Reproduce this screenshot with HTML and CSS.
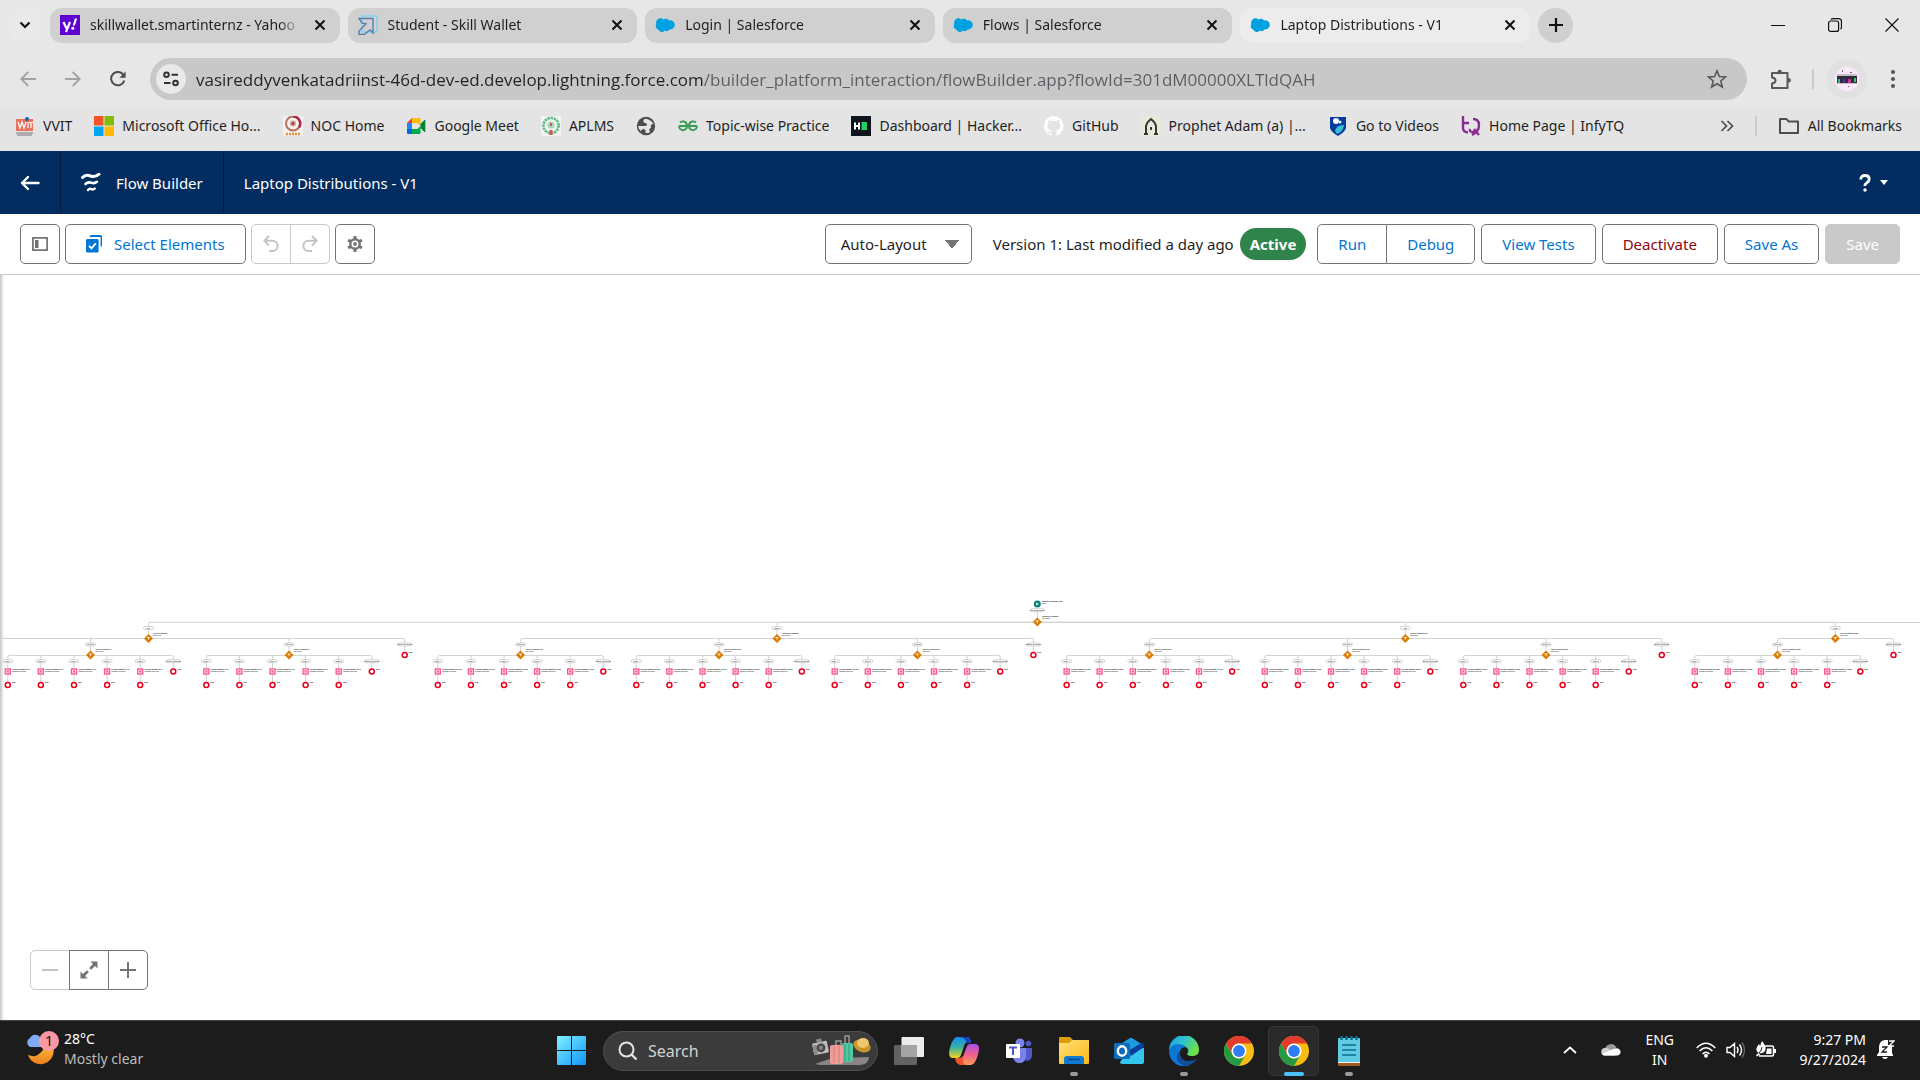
FILE: index.html
```html
<!DOCTYPE html>
<html lang="en">
<head>
<meta charset="utf-8">
<title>Laptop Distributions - V1</title>
<link rel="stylesheet" href="styles.css">
</head>
<body>
<svg class="defs" aria-hidden="true">
  <defs>
    <symbol id="i-close" viewBox="0 0 12 12"><path d="M1.5 1.5l9 9M10.500 1.500l-9 9" stroke="currentColor" stroke-width="2" fill="none"/></symbol>
    <symbol id="i-cloud" viewBox="0 0 20 14"><path d="M8.300 1.500A4 4 0 0 1 14 2.400a4.600 4.600 0 0 1 5.800 4.400c0 3-2.600 5.100-5.300 4.600a3.500 3.500 0 0 1-4.600 1.200A4 4 0 0 1 3.200 11.600 3.700 3.700 0 0 1 1.400 6 4.200 4.200 0 0 1 5.300.3c1.200 0 2.300.5 3 1.200z" fill="#00a1e0"/></symbol>
    <symbol id="i-chrome" viewBox="0 0 30 30">
      <circle cx="15" cy="15" r="15" fill="#fbbc12"/>
      <path d="M2 7.500A15 15 0 0 1 28 7.500L15 7.500a7.500 7.500 0 0 0-6.500 11.200z" fill="#e33b2e"/>
      <path d="M2 7.500A15 15 0 0 0 15 30l6.500-11.300a7.500 7.500 0 0 1-13 0z" fill="#259a45"/>
      <circle cx="15" cy="15" r="7.500" fill="#fff"/><circle cx="15" cy="15" r="5.900" fill="#2f7df6"/>
    </symbol>
  </defs>
</svg>

<header class="browser">
  <div class="tabstrip">
    <button class="tab-search" aria-label="Search tabs"><svg width="12" height="8" viewBox="0 0 12 8"><path d="M1.500 1.500L6 6l4.500-4.500" stroke="#111" stroke-width="2.200" fill="none"/></svg></button>
    <div class="tabs">
      <div class="tab">
        <svg width="20" height="20" viewBox="0 0 20 20"><path fill="#5f01d1" d="M0 0h20v20H0z"/><path d="M3.500 7l3 6.500M10 7l-4 10M16 3.500l-2.200 7" stroke="#fff" stroke-width="2.200" fill="none"/><circle cx="12.800" cy="13.300" r="1.500" fill="#fff"/></svg>
        <span class="tab-title">skillwallet.smartinternz - Yahoo</span>
        <button class="tab-close" aria-label="Close tab"><svg width="12" height="12"><use href="#i-close"/></svg></button>
      </div>
      <div class="tab">
        <svg width="20" height="20" viewBox="0 0 20 20" fill="none"><path d="M4 1h15v16H4z" stroke="#7fd4f0" stroke-width="1.400"/><path d="M1 3.500h14V18l-3-3-6 4.500H1v-3.500L8 9 4 8z" stroke="#5d7ca8" stroke-width="1.400"/></svg>
        <span class="tab-title">Student - Skill Wallet</span>
        <button class="tab-close" aria-label="Close tab"><svg width="12" height="12"><use href="#i-close"/></svg></button>
      </div>
      <div class="tab">
        <svg width="20" height="14"><use href="#i-cloud"/></svg>
        <span class="tab-title">Login | Salesforce</span>
        <button class="tab-close" aria-label="Close tab"><svg width="12" height="12"><use href="#i-close"/></svg></button>
      </div>
      <div class="tab">
        <svg width="20" height="14"><use href="#i-cloud"/></svg>
        <span class="tab-title">Flows | Salesforce</span>
        <button class="tab-close" aria-label="Close tab"><svg width="12" height="12"><use href="#i-close"/></svg></button>
      </div>
      <div class="tab tab-active">
        <svg width="20" height="14"><use href="#i-cloud"/></svg>
        <span class="tab-title">Laptop Distributions - V1</span>
        <button class="tab-close" aria-label="Close tab"><svg width="12" height="12"><use href="#i-close"/></svg></button>
      </div>
    </div>
    <div class="strip-end">
      <button class="new-tab" aria-label="New tab"><svg width="14" height="14" viewBox="0 0 14 14"><path d="M7 0v14M0 7h14" stroke="#111" stroke-width="2.200"/></svg></button>
      <div class="window-buttons">
        <button aria-label="Minimize"><svg width="14" height="14" viewBox="0 0 14 14"><path d="M0 7.500h14" stroke="#111"/></svg></button>
        <button aria-label="Restore"><svg width="14" height="14" viewBox="0 0 14 14" fill="none" stroke="#111" stroke-width="1.200"><rect x=".6" y="3" width="10" height="10.400" rx="2"/><path d="M3 1.500Q3.500.6 5 .6h5.500q3 0 3 3v5.500q0 1.500-1 2"/></svg></button>
        <button aria-label="Close"><svg width="14" height="14" viewBox="0 0 14 14"><path d="M.5.5l13 13M13.500.5l-13 13" stroke="#111" stroke-width="1.200"/></svg></button>
      </div>
    </div>
  </div>

  <div class="navbar">
    <div class="nav-buttons">
      <button aria-label="Back"><svg width="16" height="16" viewBox="0 0 16 16" fill="none" stroke="#a3a3a3" stroke-width="1.800"><path d="M16 8H1.500M8.300 1L1.300 8l7 7"/></svg></button>
      <button aria-label="Forward"><svg width="16" height="16" viewBox="0 0 16 16" fill="none" stroke="#a3a3a3" stroke-width="1.800"><path d="M0 8h14.500M7.700 1l7 7-7 7"/></svg></button>
      <button aria-label="Reload"><svg width="16" height="16" viewBox="0 0 16 16"><path d="M14.300 9.500A6.700 6.700 0 1 1 13.500 4" fill="none" stroke="#4b4d50" stroke-width="2"/><path d="M15.600.5v6.300H9.400z" fill="#4b4d50"/></svg></button>
    </div>
    <div class="omnibox">
      <button class="site-info" aria-label="View site information"><svg width="16" height="16" viewBox="0 0 16 16" fill="none" stroke="#333" stroke-width="2"><circle cx="3.500" cy="3.800" r="2.300"/><path d="M8.500 3.800H15M1 12h6.500"/><circle cx="12.500" cy="12" r="2.300"/></svg></button>
      <input class="url" aria-label="Address and search bar" value="vasireddyvenkatadriinst-46d-dev-ed.develop.lightning.force.com/builder_platform_interaction/flowBuilder.app?flowId=301dM00000XLTldQAH">
      <button aria-label="Bookmark this tab"><svg width="20" height="20" viewBox="0 0 20 20"><path d="M10 1.800l2.400 5.700 6.100.5-4.700 4 1.500 6-5.300-3.200L4.700 18l1.500-6-4.700-4 6.100-.5z" fill="none" stroke="#55585c" stroke-width="1.600"/></svg></button>
    </div>
    <div class="nav-end">
      <button aria-label="Extensions"><svg width="22" height="22" viewBox="0 0 22 22"><path d="M2 5h15.500v15H2v-4.500q3.500-.5 3.500-3T2 9.500z" fill="none" stroke="#55585c" stroke-width="2" stroke-linejoin="round"/><path d="M7.500 4.500a2.200 2.700 0 0 1 4.400 0zM18 10a2.800 2.200 0 0 1 0 4.600z" fill="#55585c"/></svg></button>
      <span class="divider"></span>
      <button aria-label="Profile"><svg width="40" height="40" viewBox="0 0 40 40"><circle cx="20" cy="20" r="20" fill="#e2e1e2"/><circle cx="20" cy="20" r="12" fill="#fce8fb"/><path fill="#c9bcca" d="M10 15h20v10H10z"/><path fill="#332a3a" d="M10 17h20v7H10z"/><path fill="#3dc27c" d="M11 20h2v4h-2zM27 19h2v4h-2z"/><path fill="#4b2fd0" d="M16 20h2v4h-2z"/><path fill="#d0308c" d="M21 20h3v4h-3z"/><path fill="#666" d="M15 11h1v2h-1zM23 13h2v1h-2zM21 27h1v1h-1z"/></svg></button>
      <button aria-label="Menu"><svg width="6" height="20" viewBox="0 0 6 20" fill="#55585c"><circle cx="3" cy="3" r="2.100"/><circle cx="3" cy="10" r="2.100"/><circle cx="3" cy="17" r="2.100"/></svg></button>
    </div>
  </div>

  <nav class="bookmarks">
    <a href="#"><svg width="20" height="20" viewBox="0 0 20 20"><path fill="#e9735f" d="M1 3h17v12H1z"/><path d="M3 6l2 6 2-6 2 6 2-6M13 6v6M14 6.500h4M16 6.500V12" stroke="#fff" stroke-width="1.200" fill="none"/><circle cx="12" cy="3" r="2" fill="#1763b0"/><path d="M1 17h17M2 19h15" stroke="#777"/></svg>VVIT</a>
    <a href="#"><svg width="20" height="20" viewBox="0 0 20 20"><path fill="#f35325" d="M0 0h9.500v9.500H0z"/><path fill="#81bc06" d="M10.500 0H20v9.500h-9.500z"/><path fill="#05a6f0" d="M0 10.500h9.500V20H0z"/><path fill="#ffba08" d="M10.500 10.500H20V20h-9.500z"/></svg>Microsoft Office Ho...</a>
    <a href="#"><svg width="20" height="20" viewBox="0 0 20 20"><path fill="#f5f1ef" d="M0 0h20v20H0z"/><circle cx="10" cy="7.500" r="7" fill="none" stroke="#b5735f" stroke-width="2"/><path d="M10 .5a7 7 0 0 1 6 11" stroke="#b0244e" stroke-width="2.400" fill="none"/><circle cx="10" cy="7.500" r="3" fill="#d1a08e"/><circle cx="10" cy="7.500" r="1.200" fill="#7d2b2b"/><path d="M3 18h14" stroke="#e0913f" stroke-width="2.400" stroke-dasharray="2 1"/></svg>NOC Home</a>
    <a href="#"><svg width="20" height="20" viewBox="0 0 20 20"><path fill="#2684fc" d="M1 7h5v7H1z"/><path fill="#ea4335" d="M1 7l5-5v5z"/><path fill="#ffba00" d="M6 2h7.500q1 0 1 1v7l-3-3H6z"/><path fill="#0066da" d="M1 13h5v5H2q-1 0-1-1z"/><path fill="#00ac47" d="M6 13h5.500l3-3v7q0 1-1 1H6z"/><path fill="#00832d" d="M14.500 8l4-4q.8-.3.800.5v11q0 .8-.8.500l-4-4z"/></svg>Google Meet</a>
    <a href="#"><svg width="20" height="20" viewBox="0 0 20 20"><path fill="#f3f3f1" d="M0 0h20v20H0z"/><circle cx="10" cy="9.500" r="7.600" fill="none" stroke="#62bd85" stroke-width="2.600" stroke-dasharray="2.500 .7"/><circle cx="10" cy="9" r="3.600" fill="#9fdcb5"/><path fill="#d75450" d="M9 7h2v3H9zM8.500 14h3v5h-3z"/></svg>APLMS</a>
    <a href="#" aria-label="Bookmark"><svg width="20" height="20" viewBox="0 0 20 20"><circle cx="10" cy="10" r="9.200" fill="#4b4d50"/><path d="M10 2.800c-2 .2-3 1.700-2.600 3 .5 1.400 2.600 1 3.500 2.300.6 1-.3 2-2 2H2.200q.3 2.700 2.300 4.900l2.700-2.200 2.300 1.100v2.900q2 .7 4.400-.6l-.6-2.900 2-2-.7-2.300 2.600-1Q16.500 4.800 10 2.800z" fill="#e4e4e4"/></svg></a>
    <a href="#"><svg width="20" height="20" viewBox="0 0 20 20" fill="none" stroke="#3a9c50" stroke-width="1.900"><path d="M1 10h18M2 6.500q2-1.500 4-1 3 .8 3 4.500t-4 4.200Q1.500 14 1 10M18 6.500q-2-1.500-4-1-3 .8-3 4.500t4 4.200Q18.500 14 19 10"/></svg>Topic-wise Practice</a>
    <a href="#"><svg width="20" height="20" viewBox="0 0 20 20"><path fill="#0e141e" d="M0 0h20v20H0z"/><path d="M4 6.500v7M8 6.500v7M4 10h4" stroke="#fff" stroke-width="2"/><path fill="#1ed05d" d="M10.500 6H16v8h-5.500z"/></svg>Dashboard | Hacker...</a>
    <a href="#"><svg width="20" height="20" viewBox="0 0 16 16"><path fill="#fff" d="M8 0a8 8 0 0 0-2.500 15.600c.4.100.5-.2.500-.4v-1.500c-2 .4-2.600-.5-2.800-1-.1-.2-.5-.9-.8-1.100-.3-.1-.7-.5 0-.5.600 0 1.100.6 1.200.8.700 1.200 1.900.9 2.300.7.100-.5.300-.9.500-1.100-1.700-.2-3.600-.9-3.600-4 0-.8.300-1.500.8-2.100-.1-.2-.4-1 .1-2.100 0 0 .7-.2 2.200.8a7.500 7.500 0 0 1 4 0c1.500-1 2.200-.8 2.200-.8.500 1.100.2 1.900.1 2.100.5.600.8 1.300.8 2.100 0 3.100-1.900 3.700-3.700 3.900.3.300.6.800.6 1.500v2.200c0 .2.100.5.500.4A8 8 0 0 0 8 0z"/></svg>GitHub</a>
    <a href="#"><svg width="20" height="20" viewBox="0 0 20 20"><path fill="#ebe8da" d="M0 0h20v20H0z"/><path d="M5 19V10q1-4 5-7 4 3 5 7v9M3 18h4M13 18h4" stroke="#333a3a" stroke-width="2" fill="none"/><path fill="#333a3a" d="M9 11h2v3H9z"/></svg>Prophet Adam (a) |...</a>
    <a href="#"><svg width="20" height="20" viewBox="0 0 20 20"><path fill="#0b3b9e" d="M2 1h16v11q-1 4-8 8-7-4-8-8z"/><circle cx="8" cy="5" r="3" fill="#fff"/><circle cx="12" cy="6" r="1.500" fill="#cfe"/><path fill="#35c3d3" d="M7 15q1-6 9-6-1 7-7 9z"/></svg>Go to Videos</a>
    <a href="#"><svg width="20" height="20" viewBox="0 0 20 20" fill="none" stroke="#8b2a94" stroke-width="2.400"><path d="M2 0v12q0 4 5 4.500M1 7h7M12 3q6 0 6 6 0 7-6 7-4 0-3-3M13 13l5 6M11 19l6-4"/></svg>Home Page | InfyTQ</a>
    <span class="bookmarks-end">
      <button aria-label="More bookmarks"><svg width="14" height="12" viewBox="0 0 14 12" fill="none" stroke="#4b4d50" stroke-width="1.700"><path d="M1.500 1l5 5-5 5M7.500 1l5 5-5 5"/></svg></button>
      <span class="divider"></span>
      <a href="#"><svg width="22" height="18" viewBox="0 0 22 18"><path d="M2 2h6.500l2 2.500H20V16H2z" fill="none" stroke="#4b4d50" stroke-width="2" stroke-linejoin="round"/></svg>All Bookmarks</a>
    </span>
  </nav>
</header>

<div class="app-header">
  <a class="app-back" href="#" aria-label="Back"><svg width="20" height="16" viewBox="0 0 20 16" fill="none" stroke="#fff" stroke-width="2.400" stroke-linecap="round" stroke-linejoin="round"><path d="M18.500 8H2M8 2L2 8l6 6"/></svg></a>
  <div class="app-name"><svg width="20" height="20" viewBox="0 0 20 20" fill="none" stroke="#fff" stroke-linecap="round"><path d="M1.500 4.500q3-3.500 8-1.500 5 1.500 8.500-1.800" stroke-width="3"/><path d="M4.500 11q2.500-2.500 6-1.200 3 1 5.500-1" stroke-width="2.600"/><path d="M7 17q1.500-1.800 3.500-.8 1.700.7 3.200-.6" stroke-width="2.400"/></svg>Flow Builder</div>
  <h1 class="flow-name">Laptop Distributions - V1</h1>
  <button class="help" aria-label="Help"><svg width="12" height="18" viewBox="0 0 12 18"><path d="M1.800 5.500q0-4 4.200-4t4.200 3.700q0 2-2.200 3.400T6 12" fill="none" stroke="#fff" stroke-width="2.800"/><circle cx="6" cy="16" r="1.700" fill="#fff"/></svg><svg width="8" height="5" viewBox="0 0 8 5"><path fill="#fff" d="M0 0h8L4 5z"/></svg></button>
</div>

<div class="toolbar">
  <button class="btn btn-icon" aria-label="Toggle toolbox"><svg width="16" height="14" viewBox="0 0 16 14"><path d="M.9.900h14.200v12.200H.9z" fill="none" stroke="#747474" stroke-width="1.700"/><path fill="#747474" d="M3 3h3.500v8H3z"/></svg></button>
  <button class="btn"><svg width="16" height="18" viewBox="0 0 16 18"><path d="M4.500 2.200q0-1.200 1.200-1.200h8.300q1.500 0 1.500 1.500v9" fill="none" stroke="#0176d3" stroke-width="1.800"/><rect y="4" width="12.600" height="13.500" rx="1.500" fill="#0176d3"/><path d="M3 10.800l2.500 2.600 4.200-5" fill="none" stroke="#fff" stroke-width="1.800"/></svg>Select Elements</button>
  <div class="btn-group">
    <button class="btn btn-icon btn-off" disabled aria-label="Undo"><svg width="16" height="18" viewBox="0 0 16 18" fill="none" stroke="#c4c4c4" stroke-width="2"><path d="M6 1L1.500 5.800 6 10.600M2 5.800h7.500a5 5 0 0 1 0 10.200H6"/></svg></button>
    <button class="btn btn-icon btn-off" disabled aria-label="Redo"><svg width="16" height="18" viewBox="0 0 16 18" fill="none" stroke="#c4c4c4" stroke-width="2"><path d="M10 1l4.500 4.800L10 10.600M14 5.800H6.500a5 5 0 0 0 0 10.200H10"/></svg></button>
  </div>
  <button class="btn btn-icon" aria-label="Settings"><svg width="16" height="16" viewBox="0 0 16 16"><circle cx="8" cy="8" r="4.700" fill="none" stroke="#747474" stroke-width="2.400"/><circle cx="8" cy="8" r="1.900" fill="#747474"/><path d="M8 0v3M8 13v3M1.100 4l2.500 1.500M12.400 10.500l2.500 1.500M1.100 12l2.500-1.500M12.400 5.500L14.900 4" stroke="#747474" stroke-width="3"/></svg></button>
  <div class="toolbar-right">
    <select class="layout-select" aria-label="Layout"><option>Auto-Layout</option></select>
    <span class="version">Version 1: Last modified a day ago</span>
    <span class="badge">Active</span>
    <div class="btn-group"><button class="btn">Run</button><button class="btn">Debug</button></div>
    <button class="btn">View Tests</button>
    <button class="btn btn-danger">Deactivate</button>
    <button class="btn">Save As</button>
    <button class="btn btn-save" disabled>Save</button>
  </div>
</div>

<main class="canvas">
  <svg class="flow" id="flow" role="img" aria-label="Flow diagram"></svg>
  <div class="zoom btn-group">
    <button class="btn btn-icon btn-off" disabled aria-label="Zoom out"><svg width="18" height="18" viewBox="0 0 18 18"><path d="M1 9h16" stroke="#c4c4c4" stroke-width="2"/></svg></button>
    <button class="btn btn-icon" aria-label="Fit to view"><svg width="18" height="18" viewBox="0 0 18 18" fill="#747474"><path d="M17.500.5v7l-2.400-2.400-4.100 3.700-1.800-1.800 3.700-4.100L10.500.5zM.5 17.500v-7l2.400 2.400L7 9.200 8.800 11l-3.700 4.100 2.400 2.400z"/></svg></button>
    <button class="btn btn-icon" aria-label="Zoom in"><svg width="18" height="18" viewBox="0 0 18 18"><path d="M1 9h16M9 1v16" stroke="#747474" stroke-width="2"/></svg></button>
  </div>
</main>

<footer class="taskbar">
  <button class="weather">
    <svg width="34" height="36" viewBox="0 0 34 36"><defs><linearGradient id="moon" x2="0" y2="1"><stop stop-color="#f8bd3a"/><stop offset="1" stop-color="#ed7f1e"/></linearGradient></defs><path d="M28 16a13 13 0 0 1-25 8q8 3 12-2 4-3 4-8z" fill="url(#moon)"/><path d="M5 16a5 5 0 0 1 0-9 6 6 0 0 1 10-1q5 1 5 10z" fill="#7fabf4"/><circle cx="24" cy="10" r="10" fill="#fc98a2"/><text x="24" y="15" class="weather-count">1</text></svg>
    <span class="two-lines"><span>28°C</span><span class="muted">Mostly clear</span></span>
  </button>

  <div class="dock">
    <button class="dock-item" aria-label="Start"><svg width="29" height="29" viewBox="0 0 29 29"><defs><linearGradient id="win" x2="1" y2="1"><stop stop-color="#7ff2ff"/><stop offset="1" stop-color="#0f93fb"/></linearGradient></defs><path fill="url(#win)" d="M0 1q0-1 1-1h13v14H0zM15 0h13q1 0 1 1v13H15zM0 15h14v14H1q-1 0-1-1zM15 15h14v13q0 1-1 1H15z"/></svg></button>
    <label class="search">
      <svg width="20" height="20" viewBox="0 0 20 20" fill="none" stroke="#e3e3e3"><circle cx="8.500" cy="8.500" r="7" stroke-width="2"/><path d="M13.500 13.500l5 5" stroke-width="2.400"/></svg>
      <input type="search" placeholder="Search" aria-label="Search">
      <svg width="60" height="34" viewBox="0 0 60 34"><path d="M4 30q14-6 24-6l30-1q0 7-9 8H9z" fill="#8a8486"/><g transform="rotate(-12 9 14)"><rect x="2" y="8" width="15" height="12" rx="1" fill="#bdbdbd"/><path fill="#8e8e8e" d="M2 10h4v10H2zM7 5h5v3H7z"/><circle cx="10" cy="14" r="4.500" fill="#4a4a4a"/><circle cx="10" cy="14" r="2" fill="#888"/></g><path d="M34 9V2h4v7M25 11V7h5v4" fill="none" stroke="#999" stroke-width="1.500"/><rect x="31" y="9" width="11" height="19" rx="2" fill="#55c9a6"/><path d="M34 10v17M38 10v17" stroke="#319d7d"/><rect x="19" y="11" width="13" height="19" rx="2" fill="#ee9d98"/><path d="M23 12v17M28 12v17" stroke="#d67c7c"/><ellipse cx="51" cy="12" rx="9" ry="6" transform="rotate(22 51 12)" fill="#c9952d"/><ellipse cx="52" cy="9" rx="6" ry="5" fill="#efc66a"/></svg>
    </label>
    <button class="dock-item" aria-label="Task view"><svg width="30" height="28" viewBox="0 0 30 28"><rect y="8" width="23" height="20" rx="1" fill="#626262"/><rect x="7.500" width="22.500" height="20" rx="1" fill="#ececec"/><path fill="#a4a4a4" d="M7.500 8H23v12H7.500z"/></svg></button>
    <button class="dock-item" aria-label="Copilot"><svg width="30" height="28" viewBox="0 0 30 28"><defs><linearGradient id="co1" x2="0" y2="1"><stop stop-color="#168cf0"/><stop offset=".5" stop-color="#3bb2a3"/><stop offset="1" stop-color="#f8d21b"/></linearGradient><linearGradient id="co2" x2="0" y2="1"><stop stop-color="#a850ef"/><stop offset=".5" stop-color="#f0608c"/><stop offset="1" stop-color="#ff9b54"/></linearGradient></defs><path d="M8 0h10q3 0 4 5h-3q-3 0-4 4l-3 9q-1 3-3 3H4q-4 0-4-5 1-9 5-14 1-2 3-2z" fill="url(#co1)"/><path d="M10 0h8q3 0 4 6h-4q-2-6-8-6z" fill="#173fc4"/><path d="M21 7h5q4 0 4 5-1 8-4 13-2 3-4 3H12q-3 0-4-7h3q3 0 4-4l3-8q1-2 3-2z" fill="url(#co2)"/><path d="M6 21h5q2 0 3-2-1 9 4 9h-6q-5 0-6-7z" fill="#f2552c"/></svg></button>
    <button class="dock-item" aria-label="Teams"><svg width="28" height="26" viewBox="0 0 28 26"><circle cx="15" cy="5" r="4.500" fill="#7b83eb"/><circle cx="23.500" cy="5.500" r="2.800" fill="#5059c9"/><path d="M17 10h10v8q-1 5-6 5z" fill="#5059c9"/><path d="M8 10h13v9q-1 6-6.500 6T8 19z" fill="#7b83eb"/><rect x="1" y="6" width="14" height="14" rx="1" fill="#fff"/><path d="M4 9.500h8M8 9v8" stroke="#5059c9" stroke-width="2"/></svg></button>
    <button class="dock-item dock-open" aria-label="File Explorer"><svg width="30" height="28" viewBox="0 0 30 28"><defs><linearGradient id="fo" x2="1" y2="1"><stop stop-color="#ffe07a"/><stop offset="1" stop-color="#fdb813"/></linearGradient></defs><path d="M0 1q0-1 1-1h10l3 3h15v6H0z" fill="#dd9c09"/><path d="M0 6h10l3-3h17v23q0 1-1 1H1q-1 0-1-1z" fill="url(#fo)"/><path d="M5 27v-5q0-3 3-3h14q3 0 3 3v5z" fill="#0f7bd3"/><path d="M9 22.500h12" stroke="#0a4a8f" stroke-width="1.500"/></svg></button>
    <button class="dock-item" aria-label="Outlook"><svg width="30" height="28" viewBox="0 0 30 28"><path d="M5 8L16 1q1-.6 2 0l11 7v6l-12 8H5z" fill="#1d9bdf"/><path d="M14 17L29 7v6L17 21z" fill="#0a3d9c"/><path d="M12 17l7-5 11-1v14q0 2-2 2H8q-2 0-2-2z" fill="#36c5f0"/><path d="M14 14L29 5l1 5-13 9z" fill="#083f99"/><rect y="6" width="16" height="16" rx="1.500" fill="#0f6cbd"/><ellipse cx="8" cy="14" rx="4.200" ry="4.700" fill="none" stroke="#fff" stroke-width="2.400"/></svg></button>
    <button class="dock-item dock-open" aria-label="Microsoft Edge"><svg width="30" height="30" viewBox="0 0 30 30"><defs><linearGradient id="ed1" x2="1" y2=".5"><stop stop-color="#1d9be0"/><stop offset=".5" stop-color="#30c3cf"/><stop offset="1" stop-color="#6fe04a"/></linearGradient></defs><path d="M0 14A15 15 0 0 1 30 14q0 6-7 6-4 0-5-2 3-4-1-7Q8 6 0 14z" fill="url(#ed1)"/><path d="M0 15q2-7 9-7 5 0 8 3-7 0-6 8 1 8 10 10A15 15 0 0 1 0 15z" fill="#0c78d4"/><path d="M11 15q-1 10 9 10 4 0 8-2-5 7-13 7-9-4-7-11 1-3 3-4z" fill="#114f9c"/></svg></button>
    <button class="dock-item" aria-label="Google Chrome"><svg width="30" height="30"><use href="#i-chrome"/></svg></button>
    <button class="dock-item dock-open dock-current" aria-label="Google Chrome, current window"><svg width="30" height="30"><use href="#i-chrome"/></svg></button>
    <button class="dock-item dock-open" aria-label="Notepad"><svg width="22" height="30" viewBox="0 0 22 30"><path fill="#a35a1e" d="M0 26h22v3q0 1-1 1H1q-1 0-1-1z"/><path fill="#f2f2f2" d="M0 24h22v3H0z"/><path fill="#62cbe4" d="M0 3q0-1 1-1h20q1 0 1 1v23H0z"/><path d="M3.500 0v4M8.500 0v4M13.500 0v4M18.500 0v4" stroke="#0b6f8e" stroke-width="2.400"/><path d="M4 9h14M4 14h14M4 19h14" stroke="#0b6f8e" stroke-width="1.600"/></svg></button>
  </div>

  <div class="tray">
    <button aria-label="Show hidden icons"><svg width="14" height="8" viewBox="0 0 14 8"><path d="M1 7l6-5.500L13 7" fill="none" stroke="#fff" stroke-width="1.700"/></svg></button>
    <button class="tray-cloud" aria-label="OneDrive"><svg width="20" height="13" viewBox="0 0 20 13"><path d="M4 6a6 6 0 0 1 11.500-1L10 9z" fill="#9a9a9a"/><path d="M4 12.500A3.700 3.700 0 0 1 4 5q3-.5 5 1.500l7.500 4q-1 2-3 2z" fill="#d0d0d0"/><path d="M1 11l9-4q6-3 8-1 3 3 .5 5.500-1 1-2.500 1H4q-2 0-3-1.500z" fill="#fff"/></svg></button>
    <button class="lang"><span>ENG</span><span>IN</span></button>
    <button class="status" aria-label="Network, volume and battery">
      <svg width="20" height="16" viewBox="0 0 20 16" fill="none" stroke="#fff" stroke-width="1.500"><path d="M.7 6q9.300-9.500 18.600 0M3.600 9q6.400-6.500 12.800 0M6.500 12q3.500-3.600 7 0"/><circle cx="10" cy="13.700" r="1.200" fill="#fff"/></svg>
      <svg width="20" height="16" viewBox="0 0 20 16" fill="none" stroke="#fff" stroke-width="1.400"><path d="M1 5.500h3l4.500-4v13l-4.500-4H1zM11 5q2 3 0 6M13.500 2.500q4 5.500 0 11"/><path d="M16 .5q5 7.500 0 15" stroke="#666"/></svg>
      <svg width="20" height="17" viewBox="0 0 20 17"><path d="M8 5h8q1.500 0 1.500 1.500v7q0 1.500-1.500 1.500H3" fill="none" stroke="#fff" stroke-width="1.500"/><path fill="#fff" d="M18 8h2v4h-2zM11 7.500h4.500V13H10zM6 0q5 6 3 10-2 3-6 2Q-1 10 1 6q1-2 2-3l1 2zM0 14l3-2 1 1.500-3 2z"/><path d="M3 12q3-3 3-6" stroke="#1c1c1c" fill="none"/></svg>
    </button>
    <button class="clock"><span>9:27 PM</span><span>9/27/2024</span></button>
    <button aria-label="Notifications"><svg width="18" height="19" viewBox="0 0 18 19"><path fill="#fff" d="M2 7q0-6 6-7h3v5h3l1 1v7l1 2v1H0v-1l2-3zM5 17h6q-1 2-3 2t-3-2z"/><path d="M5 7h5l-5 5h5" fill="none" stroke="#1c1c1c" stroke-width="1.300"/><path d="M12 1h5l-5 5h5" fill="none" stroke="#fff" stroke-width="1.300"/></svg></button>
  </div>
</footer>
<script src="flow.js"></script>
</body>
</html>
```
FILE: styles.css
```css
* { box-sizing: border-box; }

body {
  margin: 0;
  min-height: 100vh;
  display: flex;
  flex-direction: column;
  font-family: "Noto Sans", "Open Sans", sans-serif;
  font-size: 14px;
  line-height: 20px;
  color: #1f1f1f;
  background: #fff;
  overflow-x: hidden;
}

button, input, select { font: inherit; color: inherit; }
button { border: 0; background: none; padding: 0; cursor: pointer; }
button, a { display: flex; align-items: center; justify-content: center; }
a { color: inherit; text-decoration: none; }
svg { flex: none; display: block; }
.defs { position: absolute; width: 0; height: 0; }

/* Browser window */
.browser { background: #e4e4e4; }

.tabstrip {
  display: flex;
  align-items: center;
  height: 50px;
  background: #e7e7e7;
}
.tab-search {
  width: 32px;
  height: 32px;
  margin: 0 9px;
  border-radius: 10px;
  background: #e9e9e9;
}
.tabs { flex: 1; display: flex; gap: 8px; }
.tab {
  flex: 1;
  min-width: 0;
  height: 35px;
  display: flex;
  align-items: center;
  gap: 10px;
  padding: 0 14px 0 10px;
  border-radius: 12px;
  background: #d0d0d0;
}
.tab-active { background: #ececec; }
.tab-title {
  flex: 1;
  overflow: hidden;
  white-space: nowrap;
  mask-image: linear-gradient(to right, #000 90%, transparent 100%);
}
.tab-close { width: 12px; height: 12px; margin-left: 4px; color: #111; }
.strip-end {
  width: 390px;
  display: flex;
  align-items: center;
  justify-content: space-between;
  padding-left: 8px;
}
.new-tab { width: 35px; height: 35px; border-radius: 50%; background: #cfcfcf; }
.window-buttons { display: flex; }
.window-buttons button { width: 57px; height: 40px; }

.navbar { display: flex; align-items: center; height: 58px; background: #e7e7e7; }
.nav-buttons { display: flex; width: 150px; padding-left: 5px; }
.nav-buttons button { width: 45px; height: 40px; }
.omnibox {
  flex: 1;
  display: flex;
  align-items: center;
  height: 42px;
  padding: 0 20px 0 6px;
  border-radius: 21px;
  background: #c8c8c8;
}
.site-info { width: 30px; height: 30px; border-radius: 50%; background: #e9e9e9; }
.url {
  flex: 1;
  min-width: 0;
  height: 40px;
  margin-left: 10px;
  border: 0;
  padding: 0;
  outline: 0;
  font-family: "Open Sans", sans-serif;
  font-size: 17px;
  color: transparent;
  background: linear-gradient(to right, #202124 508px, #5a5d61 508px);
  background-clip: text;
}
.nav-end { display: flex; align-items: center; width: 173px; padding-left: 23px; }
.divider { width: 2px; height: 20px; background: #cbcbcb; }
.nav-end .divider { margin: 0 13px 0 20px; }
.nav-end button:last-child { width: 20px; margin-left: 16px; }

.bookmarks {
  display: flex;
  align-items: center;
  gap: 22px;
  height: 43px;
  padding: 0 18px 8px 15px;
  white-space: nowrap;
}
.bookmarks a { gap: 8px; }
.bookmarks-end { display: flex; align-items: center; gap: 21px; margin-left: auto; }

/* Application header */
.app-header {
  display: flex;
  height: 63px;
  background: #032d60;
  color: #fff;
  font-size: 15px;
}
.app-back { width: 61px; border-right: 1px solid #061c3d; }
.app-name {
  display: flex;
  align-items: center;
  gap: 15px;
  padding: 0 20px;
  border-right: 1px solid #061c3d;
}
.flow-name { margin: auto 20px; font-size: 15px; font-weight: 400; }
.help { margin-left: auto; gap: 9px; padding: 0 32px; }

/* Toolbar */
.toolbar {
  display: flex;
  align-items: center;
  gap: 5px;
  min-height: 61px;
  padding: 0 20px;
  border-bottom: 1px solid #c9c9c9;
  font-size: 15px;
}
.toolbar-right { display: flex; align-items: center; gap: 6px; margin-left: auto; }
.btn {
  height: 40px;
  padding: 0 20px;
  gap: 12px;
  border: 1px solid #747474;
  border-radius: 5px;
  background: #fff;
  color: #0176d3;
  white-space: nowrap;
}
.btn-icon { width: 40px; padding: 0; }
.btn-group { display: flex; }
.btn-group .btn + .btn { margin-left: -1px; }
.btn-group .btn:not(:first-child) { border-top-left-radius: 0; border-bottom-left-radius: 0; }
.btn-group .btn:not(:last-child) { border-top-right-radius: 0; border-bottom-right-radius: 0; }
.btn-off { border-color: #c9c9c9; }
.btn-danger { color: #8e030f; }
.btn-save { border-color: #c9c9c9; background: #c9c9c9; color: #fff; }
.layout-select {
  appearance: none;
  width: 147px;
  height: 40px;
  padding: 0 15px;
  border: 1px solid #747474;
  border-radius: 5px;
  background-color: #fff;
  background-image: linear-gradient(to bottom right, #747474 50%, transparent 50%), linear-gradient(to bottom left, #747474 50%, transparent 50%);
  background-size: 7px 9px;
  background-position: right 12px center, right 19px center;
  background-repeat: no-repeat;
}
.version { margin-left: 15px; white-space: nowrap; }
.badge {
  padding: 6px 10px;
  margin-right: 5px;
  border-radius: 16px;
  background: #2e844a;
  color: #fff;
  font-weight: 700;
}

/* Flow canvas */
.canvas {
  position: relative;
  flex: 1;
  min-height: 500px;
  overflow: hidden;
  box-shadow: inset 4px 0 3px -2px #c4c4c4;
}
.flow { position: absolute; inset: 0; width: 100%; height: 100%; }
.flow text { font-family: Roboto, sans-serif; font-size: 2px; font-weight: 700; fill: #222; }
.flow .muted-text { font-weight: 400; }
.flow .centered { font-weight: 400; text-anchor: middle; }
.link { fill: none; stroke: #d3d3d3; }
.pill { fill: #fff; stroke: #b9b9b9; stroke-width: .6px; }
.zoom { position: absolute; left: 30px; bottom: 30px; }

/* Taskbar */
.taskbar {
  display: grid;
  grid-template-columns: 1fr auto 1fr;
  align-items: center;
  height: 60px;
  border-top: 1px solid #454545;
  background: #1c1c1c;
  color: #fff;
}
.weather { justify-self: start; gap: 5px; padding: 0 0 3px 25px; text-align: left; }
.weather-count { font-size: 15px; fill: #222; text-anchor: middle; }
.two-lines { display: flex; flex-direction: column; }
.muted { color: #bcbcbc; }
.dock { display: flex; align-items: center; }
.dock-item { position: relative; width: 55px; height: 50px; }
.dock-open::after {
  content: "";
  position: absolute;
  left: 50%;
  bottom: 0;
  width: 8px;
  height: 4px;
  border-radius: 2px;
  background: #9a9a9a;
  transform: translateX(-50%);
}
.dock-current::before {
  content: "";
  position: absolute;
  inset: 0 2px;
  border: 1px solid #363636;
  border-radius: 5px;
  background: #2a2a2a;
}
.dock-current svg { position: relative; }
.dock-current::after { width: 20px; background: #4cc2ff; }
.search {
  display: flex;
  align-items: center;
  width: 275px;
  height: 40px;
  margin: 0 3px 0 4px;
  padding: 0 6px 0 14px;
  border: 1px solid #4f4f4f;
  border-radius: 20px;
  background: #3b3b3b;
}
.search input {
  flex: 1;
  min-width: 0;
  margin-left: 10px;
  padding: 0;
  border: 0;
  outline: 0;
  background: none;
  font-size: 16px;
}
.search input::placeholder { color: #d2d2d2; opacity: 1; }
.tray { display: flex; align-items: center; justify-self: end; padding: 0 25px 2px 0; }
.tray-cloud { margin: 0 24px; }
.lang { flex-direction: column; }
.status { gap: 10px; margin: 0 20px 0 22px; }
.clock { flex-direction: column; align-items: flex-end; width: 70px; margin-right: 11px; }
```
FILE: flow.js
```js
// Draws the auto-layout flow tree at its fitted zoom level.
(function () {
  var svg = document.getElementById("flow");
  var out = [];

  var ROOT_X = 1037.3;
  var Y = { start: 329, rootPill: 335.2, root: 347.3, l1Pill: 353, l1: 363.500, l2Pill: 369.500, l2: 380, l3Pill: 386.200, l3: 396.500, end: 410 };
  var STEP = 33.100;

  var branches = [
    { x: 148.5, label: "cse", title: "year of student", groups: [[90.5, "3rd year"], [289, "4th year"]], other: 404.7, dept: "IT" },
    { x: 777, label: "Btech", title: "Section of student", groups: [[520.5, "2nd year"], [719, "3rd year"], [917.4, "4th year"]], other: 1033.4, dept: "Cse" },
    { x: 1405.3, label: "ece", title: "year of student ece", groups: [[1149.3, "Section 2"], [1347.5, "Section 3"], [1546, "Section 4"]], other: 1661.8, dept: "Ece" },
    { x: 1835.3, label: "Csm", title: "year of student csm", groups: [[1777.5, "2nd year"]], other: 1893.5, dept: "Csm" }
  ];

  function text(x, y, s, cls) {
    out.push('<text x="' + x + '" y="' + y + '" class="' + (cls || "") + '">' + s + "</text>");
  }
  function pill(x, y, w, s) {
    out.push('<rect class="pill" x="' + (x - w / 2) + '" y="' + (y - 1.5) + '" width="' + w + '" height="3" rx="1.500"/>');
    text(x, y + 0.7, s, "centered");
  }
  function link(x1, x2, y, drop) {
    var d = x2 > x1 ? -1.500 : 1.500;
    out.push('<path class="link" d="M' + x1 + " " + y + "H" + (x2 + d) + "Q" + x2 + " " + y + " " + x2 + " " + (y + 1.5) + "V" + drop + '"/>');
  }
  function decision(x, y, title) {
    out.push('<path fill="#dd7a01" d="M' + x + " " + (y - 4.5) + 'l4.500 4.500-4.500 4.500-4.500-4.500z"/><path d="M' + (x - 1.5) + " " + (y - 1) + 'h3M' + x + " " + (y - 1) + 'v2.200" stroke="#fff" stroke-width=".8" fill="none"/>');
    text(x + 5, y - 4.900, title);
    text(x + 5, y - 2.900, "Decision", "muted-text");
  }
  function end(x, y) {
    out.push('<circle cx="' + x + '" cy="' + y + '" r="2.500" fill="#fff" stroke="#ea001e" stroke-width="1.500"/>');
    text(x + 4.2, y - 2, "End");
  }
  function update(x, y, title) {
    out.push('<rect x="' + (x - 3.2) + '" y="' + (y - 3.2) + '" width="6.400" height="6.400" fill="#ff538a"/><path d="M' + (x - 1.5) + " " + (y - 1.5) + 'h3v3h-3z" fill="none" stroke="#fff" stroke-width=".8"/>');
    text(x + 4.2, y - 1.4, title);
    text(x + 4.2, y + 0.6, "Update Records", "muted-text");
  }

  out.push('<path class="link" d="M' + ROOT_X + ' 347.500H2400"/>');
  out.push('<path class="link" d="M' + ROOT_X + ' 333V347"/>');
  // The first branch continues past the left edge of the canvas.
  out.push('<path class="link" d="M' + branches[0].x + " " + Y.l1 + 'H-100"/>');
  branches.forEach(function (b) {
    link(ROOT_X, b.x, Y.root, Y.l1);
    link(b.x, b.other, Y.l1, Y.l2);
    pill(b.x, Y.l1Pill, 10, b.label);
    pill(b.other, Y.l2Pill, 14, "Default Outcome");
    end(b.other, Y.l2);
    b.groups.forEach(function (g) {
      var x = g[0];
      link(b.x, x, Y.l1, Y.l2);
      pill(x, Y.l2Pill, 10, g[1]);
      for (var i = 0; i < 6; i++) {
        var cx = Math.round((x + (i - 2.5) * STEP) * 10) / 10;
        link(x, cx, Y.l2 + 0.5, i < 5 ? Y.end : Y.l3);
        pill(cx, Y.l3Pill, i < 5 ? 10 : 14, i < 5 ? "Case " + (i + 1) : "Default Outcome");
        if (i < 5) {
          update(cx, Y.l3, "Section update of " + b.dept);
          end(cx, Y.end);
        } else {
          end(cx, Y.l3);
        }
      }
      decision(x, Y.l2, "year of section " + b.dept);
    });
    decision(b.x, Y.l1, b.title);
  });

  out.push('<circle cx="' + ROOT_X + '" cy="' + Y.start + '" r="3.500" fill="#0b827c"/><path fill="#fff" d="M' + (ROOT_X - 1) + " " + (Y.start - 1.5) + 'l2.500 1.500-2.500 1.500z"/>');
  text(ROOT_X + 4.500, Y.start - 1.800, "Record-Triggered Flow");
  text(ROOT_X + 4.500, Y.start + 0.200, "Start", "muted-text");
  pill(ROOT_X, Y.rootPill, 14, "Run Immediately");
  decision(ROOT_X, Y.root - 0.300, "Branch of student");

  svg.innerHTML = out.join("");
})();
```
